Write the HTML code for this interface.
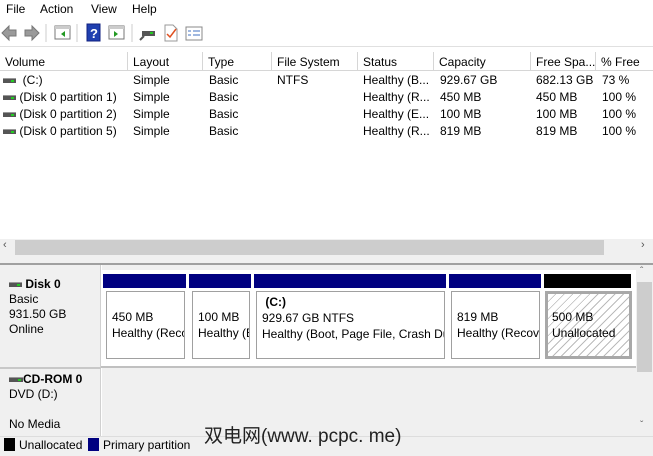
<!DOCTYPE html>
<html><head><meta charset="utf-8"><style>
*{margin:0;padding:0;box-sizing:border-box}
body{width:653px;height:456px;overflow:hidden;background:#fff;font-family:"Liberation Sans",sans-serif;font-size:12px;color:#000;position:relative}
.a{position:absolute;white-space:nowrap}
.hdr{position:absolute;top:52px;height:19px;border-right:1px solid #d6d6d6;border-bottom:1px solid #d6d6d6;padding:3px 0 0 5px;background:#fff;white-space:nowrap;overflow:hidden}
.drv{display:inline-block;width:13px;height:5px;background:#555;border-top:1px solid #999;position:relative;vertical-align:middle}
.drv:after{content:"";position:absolute;right:2px;top:1px;width:3px;height:2px;background:#2c2}
.bar{position:absolute;top:274px;height:14px;background:#000080}
.box{position:absolute;top:291px;height:68px;background:#fff;border:1px solid #a0a0a0;padding:17px 0 0 5px;overflow:hidden;line-height:16px;white-space:nowrap}
</style></head><body>
<div class="a" style="left:6px;top:2px">File</div>
<div class="a" style="left:40px;top:2px">Action</div>
<div class="a" style="left:91px;top:2px">View</div>
<div class="a" style="left:132px;top:2px">Help</div>
<svg class="a" style="left:0;top:22px" width="220" height="22">
<path d="M2 11 L9 4 V8 H16 V14 H9 V18 Z" fill="#9a9a9a" stroke="#777"/>
<path d="M39 11 L32 4 V8 H25 V14 H32 V18 Z" fill="#9a9a9a" stroke="#777"/>
<line x1="46" y1="2" x2="46" y2="20" stroke="#ccc"/>
<rect x="55" y="4" width="15" height="13" fill="#fff" stroke="#777"/><rect x="55" y="4" width="15" height="3" fill="#ccc"/><path d="M65 9 L61 12 L65 15Z" fill="#292"/>
<line x1="77" y1="2" x2="77" y2="20" stroke="#ccc"/>
<rect x="87" y="2" width="13" height="17" fill="#2040b0" stroke="#102080"/><text x="90" y="16" fill="#fff" font-size="13" font-weight="bold">?</text>
<rect x="109" y="4" width="15" height="13" fill="#fff" stroke="#777"/><rect x="109" y="4" width="15" height="3" fill="#ccc"/><path d="M114 9 L118 12 L114 15Z" fill="#292"/>
<line x1="132" y1="2" x2="132" y2="20" stroke="#ccc"/>
<rect x="142" y="9" width="13" height="5" fill="#555"/><rect x="150" y="10" width="3" height="2" fill="#2c2"/><line x1="144" y1="14" x2="140" y2="18" stroke="#555" stroke-width="2"/>
<path d="M165 3 H173 L177 7 V19 H165Z" fill="#fff" stroke="#999"/><path d="M167 12 L170 15 L176 7" stroke="#e05020" stroke-width="1.5" fill="none"/>
<rect x="186" y="5" width="16" height="13" fill="#fff" stroke="#888"/><path d="M188 9h3M188 13h3M193 9h7M193 13h7" stroke="#4070c0"/>
</svg>
<div class="a" style="left:0;top:46px;width:653px;height:1px;background:#e0e0e0"></div>
<div class="hdr" style="left:0;width:128px">Volume</div>
<div class="hdr" style="left:128px;width:75px">Layout</div>
<div class="hdr" style="left:203px;width:69px">Type</div>
<div class="hdr" style="left:272px;width:86px">File System</div>
<div class="hdr" style="left:358px;width:76px">Status</div>
<div class="hdr" style="left:434px;width:97px">Capacity</div>
<div class="hdr" style="left:531px;width:65px">Free Spa...</div>
<div class="hdr" style="left:596px;width:57px;border-right:0">% Free</div>
<div class="a" style="left:3px;top:72px;line-height:17px">
<div><span class="drv"></span>&nbsp; (C:)</div>
<div><span class="drv"></span> (Disk 0 partition 1)</div>
<div><span class="drv"></span> (Disk 0 partition 2)</div>
<div><span class="drv"></span> (Disk 0 partition 5)</div></div>
<div class="a" style="left:133px;top:72px;line-height:17px">Simple<br>Simple<br>Simple<br>Simple</div>
<div class="a" style="left:209px;top:72px;line-height:17px">Basic<br>Basic<br>Basic<br>Basic</div>
<div class="a" style="left:277px;top:72px;line-height:17px">NTFS</div>
<div class="a" style="left:363px;top:72px;line-height:17px">Healthy (B...<br>Healthy (R...<br>Healthy (E...<br>Healthy (R...</div>
<div class="a" style="left:440px;top:72px;line-height:17px">929.67 GB<br>450 MB<br>100 MB<br>819 MB</div>
<div class="a" style="left:536px;top:72px;line-height:17px">682.13 GB<br>450 MB<br>100 MB<br>819 MB</div>
<div class="a" style="left:602px;top:72px;line-height:17px">73 %<br>100 %<br>100 %<br>100 %</div>
<div class="a" style="left:0;top:239px;width:653px;height:17px;background:#f0f0f0"></div>
<div class="a" style="left:15px;top:240px;width:589px;height:15px;background:#cdcdcd"></div>
<div class="a" style="left:3px;top:239px;font-size:11px;color:#555">&lsaquo;</div>
<div class="a" style="left:641px;top:239px;font-size:11px;color:#555">&rsaquo;</div>
<div class="a" style="left:0;top:256px;width:653px;height:9px;background:#f0f0f0;border-bottom:2px solid #a0a0a0"></div>
<div class="a" style="left:0;top:265px;width:636px;height:171px;background:#f0f0f0"></div>
<div class="a" style="left:100px;top:265px;width:2px;height:171px;background:#fff;border-left:1px solid #d0d0d0"></div>
<div class="a" style="left:101px;top:270px;width:535px;height:98px;background:#fff;border-bottom:2px solid #c0c0c0"></div>
<div class="a" style="left:0;top:367px;width:101px;height:2px;background:#c8c8c8"></div>
<div class="a" style="left:9px;top:277px;line-height:15px"><span class="drv"></span><b> Disk 0</b><br>Basic<br>931.50 GB<br>Online</div>
<div class="bar" style="left:103px;width:83px"></div>
<div class="bar" style="left:189px;width:62px"></div>
<div class="bar" style="left:254px;width:192px"></div>
<div class="bar" style="left:449px;width:92px"></div>
<div class="bar" style="left:544px;width:87px;background:#000"></div>
<div class="box" style="left:106px;width:79px">450 MB<br>Healthy (Recovery</div>
<div class="box" style="left:192px;width:58px">100 MB<br>Healthy (EFI</div>
<div class="box" style="left:256px;width:189px;padding-top:2px">&nbsp;<b>(C:)</b><br>929.67 GB NTFS<br>Healthy (Boot, Page File, Crash Du</div>
<div class="box" style="left:451px;width:89px">819 MB<br>Healthy (Recov</div>
<div class="box" style="left:545px;width:87px;border:3px solid #a8a8a8;padding:15px 0 0 4px;background:repeating-linear-gradient(135deg,#fff 0 5px,#bbb 5px 6px)">500 MB<br>Unallocated</div>
<div class="a" style="left:9px;top:372px;line-height:15px"><span class="drv" style="width:14px"></span><b>CD-ROM 0</b><br>DVD (D:)<br><br>No Media</div>
<div class="a" style="left:636px;top:265px;width:17px;height:171px;background:#f0f0f0"></div>
<div class="a" style="left:637px;top:282px;width:15px;height:90px;background:#cdcdcd"></div>
<div class="a" style="left:640px;top:266px;font-size:10px;color:#666">&#710;</div>
<div class="a" style="left:640px;top:420px;font-size:10px;color:#666">&#711;</div>
<div class="a" style="left:0;top:436px;width:653px;height:20px;background:#f0f0f0;border-top:1px solid #ddd"></div>
<div class="a" style="left:4px;top:438px;width:11px;height:13px;background:#000"></div>
<div class="a" style="left:19px;top:438px">Unallocated</div>
<div class="a" style="left:88px;top:438px;width:11px;height:13px;background:#000080"></div>
<div class="a" style="left:103px;top:438px">Primary partition</div>
<div class="a" style="left:204px;top:421px;font-size:19px;color:#222;font-family:'Liberation Sans','Noto Sans CJK SC',sans-serif">双电网(www. pcpc. me)</div>
</body></html>
